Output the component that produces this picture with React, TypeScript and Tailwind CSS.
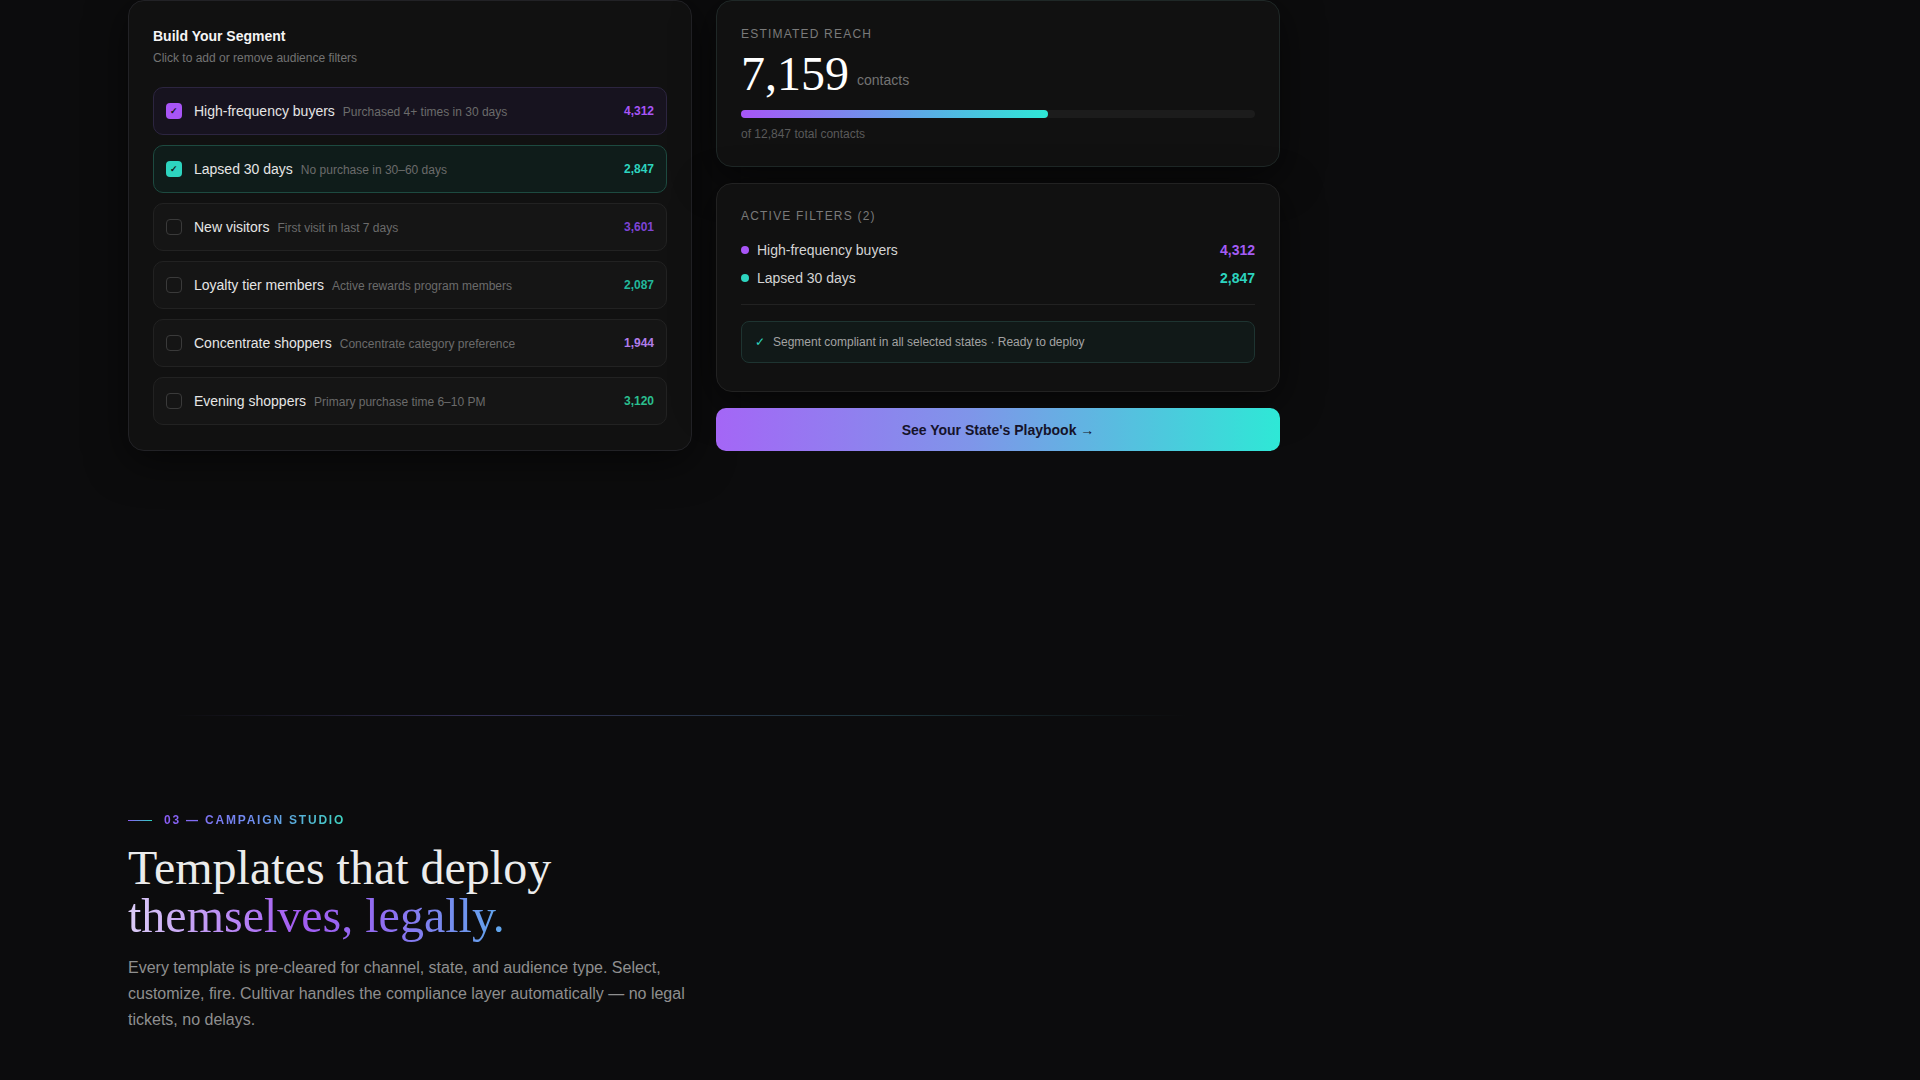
const filters = [
  { label: "High-frequency buyers", desc: "Purchased 4+ times in 30 days", count: "4,312", tone: "purple", checked: true, countColor: "text-[#a855f7]" },
  { label: "Lapsed 30 days", desc: "No purchase in 30–60 days", count: "2,847", tone: "teal", checked: true, countColor: "text-[#2dd4bf]" },
  { label: "New visitors", desc: "First visit in last 7 days", count: "3,601", tone: "purple", checked: false, countColor: "text-[#7e44d6]" },
  { label: "Loyalty tier members", desc: "Active rewards program members", count: "2,087", tone: "teal", checked: false, countColor: "text-[#22b89c]" },
  { label: "Concentrate shoppers", desc: "Concentrate category preference", count: "1,944", tone: "purple", checked: false, countColor: "text-[#b07ce8]" },
  { label: "Evening shoppers", desc: "Primary purchase time 6–10 PM", count: "3,120", tone: "teal", checked: false, countColor: "text-[#2bbf8f]" },
]

function FilterRow({ f }: { f: (typeof filters)[number] }) {
  const rowStyle = !f.checked
    ? "bg-[#151515] border-[#222222]"
    : f.tone === "purple"
      ? "bg-[#17131f] border-[#2c2540]"
      : "bg-[#0f1c1a] border-[#1d4a40]"
  const boxStyle = !f.checked
    ? "border border-[#3a3a3a]"
    : f.tone === "purple"
      ? "bg-[#a855f7]"
      : "bg-[#2dd4bf]"

  return (
    <div className={`flex items-center h-12 px-3 rounded-[10px] border ${rowStyle}`}>
      <div className={`w-4 h-4 rounded-[4px] flex items-center justify-center flex-shrink-0 ${boxStyle}`}>
        {f.checked && <span className="text-[9px] font-bold leading-none text-[#141414]">✓</span>}
      </div>
      <div className="flex items-baseline gap-2 ml-3">
        <span className="text-sm text-[#e5e5e5]">{f.label}</span>
        <span className="text-xs text-[#6b6b6b]">{f.desc}</span>
      </div>
      <span className={`ml-auto text-xs font-bold ${f.countColor}`}>{f.count}</span>
    </div>
  )
}

export default function App() {
  return (
    <div className="min-h-screen bg-[#0c0c0d] font-['Liberation_Sans',Arial,sans-serif] overflow-hidden">
      <div className="w-[1408px] px-32">
        {/* Segment builder */}
        <div className="grid grid-cols-2 gap-6">
          <div className="rounded-2xl border border-[#222226] bg-[#111111] px-6 pt-[25px] pb-[23px] shadow-[0_10px_40px_rgba(0,0,0,0.55)]">
            <h3 className="text-sm font-bold text-[#f5f5f5]">Build Your Segment</h3>
            <p className="mt-1 text-xs text-[#737373]">Click to add or remove audience filters</p>
            <div className="mt-[21px] flex flex-col gap-2.5">
              {filters.map((f) => (
                <FilterRow key={f.label} f={f} />
              ))}
            </div>
          </div>

          <div className="flex flex-col gap-4">
            <div className="rounded-2xl border border-[#1f2827] bg-[#111111] px-6 pt-[25px] pb-6 shadow-[0_10px_40px_rgba(0,0,0,0.55)]">
              <div className="text-xs uppercase tracking-widest text-[#7a7a7a]">Estimated Reach</div>
              <div className="mt-2 flex items-end">
                <span className="font-['Liberation_Serif','Times_New_Roman',serif] text-5xl leading-none text-white">7,159</span>
                <span className="ml-2 mb-2 text-sm text-[#737373]">contacts</span>
              </div>
              <div className="mt-3 h-2 rounded-full bg-[#1c1c1c]">
                <div className="h-2 w-[59.8%] rounded-full bg-[linear-gradient(90deg,#a855f7,#60a5e8_55%,#2ee8d6)]" />
              </div>
              <p className="mt-2 text-xs text-[#5a5a5a]">of 12,847 total contacts</p>
            </div>

            <div className="rounded-2xl border border-[#222222] bg-[#111111] px-6 pt-6 pb-7 shadow-[0_10px_40px_rgba(0,0,0,0.55)]">
              <div className="text-xs uppercase tracking-widest text-[#7a7a7a]">Active Filters (2)</div>
              <div className="mt-4 flex flex-col gap-2">
                <div className="flex items-center">
                  <span className="w-2 h-2 rounded-full bg-[#a855f7]" />
                  <span className="ml-2 text-sm text-[#d4d4d4]">High-frequency buyers</span>
                  <span className="ml-auto text-sm font-bold text-[#a45cf5]">4,312</span>
                </div>
                <div className="flex items-center">
                  <span className="w-2 h-2 rounded-full bg-[#2dd4bf]" />
                  <span className="ml-2 text-sm text-[#d4d4d4]">Lapsed 30 days</span>
                  <span className="ml-auto text-sm font-bold text-[#2dd4bf]">2,847</span>
                </div>
              </div>
              <div className="mt-4 border-t border-[#222222] pt-4">
                <div className="flex items-center gap-2 rounded-lg border border-[#1e3431] bg-[#111918] px-[13px] py-3 text-xs text-[#a3a3a3]">
                  <span className="text-[#2dd4bf]">✓</span>
                  <span>Segment compliant in all selected states · Ready to deploy</span>
                </div>
              </div>
            </div>

            <button className="h-[43px] w-full rounded-[10px] bg-[linear-gradient(90deg,#a466f6,#7f95e9_45%,#2ee8d6)] text-sm font-bold text-[#15132a]">
              See Your State's Playbook →
            </button>
          </div>
        </div>

        {/* Divider */}
        <div className="mt-[264px] h-px bg-[linear-gradient(90deg,transparent_4%,rgba(120,110,210,0.35)_30%,rgba(70,150,170,0.3)_65%,transparent_92%)]" />

        {/* Campaign studio intro */}
        <div className="mt-[96px]">
          <div className="flex items-center gap-3">
            <span className="h-px w-6 bg-[linear-gradient(90deg,#8b5cf6,#2dd4bf)]" />
            <span className="bg-[linear-gradient(90deg,#8b5cf6,#6f8ff0_50%,#3fd4c0)] bg-clip-text text-xs font-bold uppercase tracking-[0.15em] text-transparent">
              03 — Campaign Studio
            </span>
          </div>
          <h2 className="mt-4 font-['Liberation_Serif','Times_New_Roman',serif] text-5xl leading-none text-[#ececec]">
            Templates that deploy
            <br />
            <span className="bg-[linear-gradient(90deg,#dccdf7,#a35cf2_45%,#8d70f0_70%,#5fa8ec)] bg-clip-text text-transparent">
              themselves, legally.
            </span>
          </h2>
          <p className="mt-[15px] max-w-xl text-base leading-relaxed text-[#8f8f8f]">
            Every template is pre-cleared for channel, state, and audience type. Select, customize, fire. Cultivar handles the
            compliance layer automatically — no legal tickets, no delays.
          </p>
        </div>
      </div>
    </div>
  )
}
